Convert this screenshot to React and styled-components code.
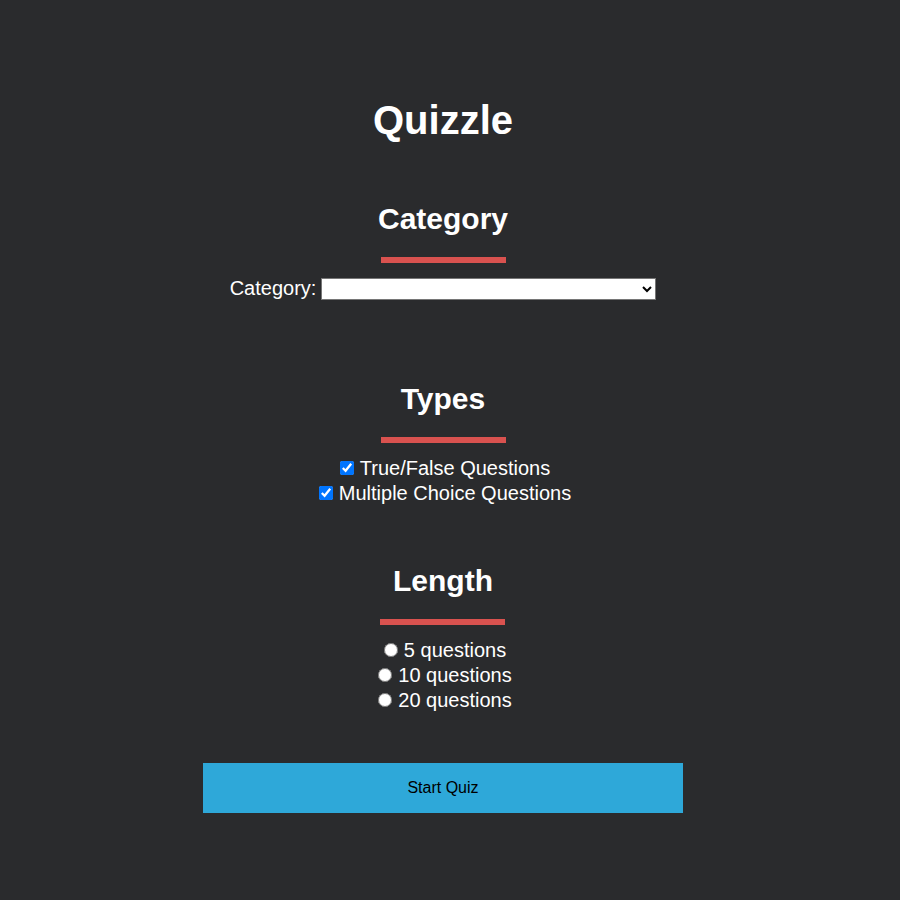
import React from "react";
import styled, { createGlobalStyle } from "styled-components";

const Global = createGlobalStyle`
  html, body {
    margin: 0;
    background-color: #2a2b2d;
  }
  body {
    font-family: "Liberation Sans", Arial, sans-serif;
    color: #ffffff;
    font-size: 20px;
  }
`;

const MainCont = styled.div`
  display: flex;
  flex-direction: column;
  align-items: center;
  box-sizing: border-box;
  width: 100%;
  padding: 97px 14px 87px 0;
  min-height: 900px;
`;

const Title = styled.h1`
  margin: 0;
  font-size: 40px;
  line-height: 46px;
  font-weight: bold;
`;

const Section = styled.div`
  display: flex;
  flex-direction: column;
  align-items: center;
  margin-top: ${(p) => p.top}px;
`;

const Heading = styled.h2`
  margin: 0;
  font-size: 30px;
  line-height: 34px;
  font-weight: bold;
`;

const Bar = styled.div`
  width: 125px;
  height: 6px;
  margin-top: 21px;
  background-color: #d9524f;
`;

const SelectRow = styled.label`
  display: flex;
  align-items: center;
  height: 23px;
  margin-top: 14px;
  line-height: 23px;
`;

const Select = styled.select`
  width: 335px;
  height: 22px;
  margin-left: 5px;
  background: #ffffff;
  border: 1px solid #767676;
  border-radius: 0;
  font-family: "Liberation Sans", Arial, sans-serif;
  font-size: 13px;
`;

const List = styled.div`
  display: flex;
  flex-direction: column;
  align-items: center;
  margin-top: 13px;
`;

const Option = styled.label`
  display: flex;
  align-items: center;
  height: 25px;
  line-height: 23px;

  input {
    margin: 0 6px 2px 4px;
    width: 14px;
    height: 14px;
  }
`;

const StartBtn = styled.button`
  width: 480px;
  height: 50px;
  margin-top: 50px;
  border: none;
  background-color: #2ea8d9;
  color: #000000;
  font-family: "Liberation Sans", Arial, sans-serif;
  font-size: 16px;
  cursor: pointer;
`;

const types = ["True/False Questions", "Multiple Choice Questions"];
const lengths = [5, 10, 20];

export default function App() {
  return (
    <MainCont>
      <Global />
      <Title>Quizzle</Title>

      <Section top={59}>
        <Heading>Category</Heading>
        <Bar />
        <SelectRow>
          Category:
          <Select defaultValue="">
            <option value=""></option>
          </Select>
        </SelectRow>
      </Section>

      <Section top={82}>
        <Heading>Types</Heading>
        <Bar />
        <List>
          {types.map((t) => (
            <Option key={t}>
              <input type="checkbox" defaultChecked />
              {t}
            </Option>
          ))}
        </List>
      </Section>

      <Section top={58}>
        <Heading>Length</Heading>
        <Bar />
        <List>
          {lengths.map((n) => (
            <Option key={n}>
              <input type="radio" name="length" />
              {n} questions
            </Option>
          ))}
        </List>
      </Section>

      <StartBtn>Start Quiz</StartBtn>
    </MainCont>
  );
}
